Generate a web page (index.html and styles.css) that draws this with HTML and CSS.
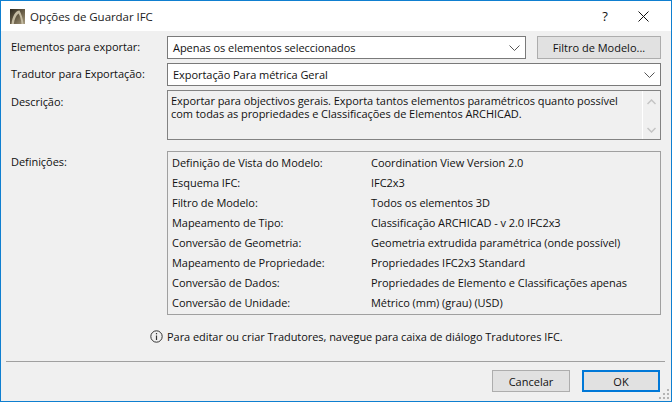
FILE: index.html
```html
<!DOCTYPE html>
<html lang="pt">
<head>
  <meta charset="UTF-8">
  <title>Opções de Guardar IFC</title>
  <link rel="stylesheet" href="styles.css">
</head>
<body>
  <div class="window">
    <div class="titlebar">
      <svg class="app-icon" width="15" height="15" viewBox="0 0 15 15">
        <defs>
          <linearGradient id="logo-bg" x1="0" y1="0" x2="1" y2="1">
            <stop offset="0" stop-color="#2e2a20"/>
            <stop offset="0.55" stop-color="#6a5f48"/>
            <stop offset="1" stop-color="#a89c80"/>
          </linearGradient>
        </defs>
        <rect width="15" height="15" fill="url(#logo-bg)"/>
        <path d="M1.500 15C2.500 7 5.500 1.500 9.500 1.500C11.500 5 13 10 13.500 15H11.500C11 10 10 6.500 8.500 4.500C6 6.500 4.500 10 3.800 15Z" fill="#c4bba2"/>
      </svg>
      <span class="title">Opções de Guardar IFC</span>
      <span class="help">?</span>
      <svg class="close" width="11" height="11" viewBox="0 0 11 11">
        <path d="M0.500 0.500L10.500 10.500M10.500 0.500L0.500 10.500" stroke="#111" stroke-width="1" fill="none"/>
      </svg>
    </div>

    <div class="content">
      <div class="form">
        <label class="label label-row1">Elementos para exportar:</label>
        <div class="row">
          <div class="select grow">
            <span>Apenas os elementos seleccionados</span>
            <svg class="chevron" width="11" height="6" viewBox="0 0 11 6"><path d="M0.500 0.500L5.500 5.500L10.500 0.500" stroke="#555" fill="none"/></svg>
          </div>
          <button class="btn filter-btn">Filtro de Modelo...</button>
        </div>

        <label class="label label-row2">Tradutor para Exportação:</label>
        <div class="select">
          <span>Exportação Para métrica Geral</span>
          <svg class="chevron" width="11" height="6" viewBox="0 0 11 6"><path d="M0.500 0.500L5.500 5.500L10.500 0.500" stroke="#555" fill="none"/></svg>
        </div>

        <label class="label label-desc">Descrição:</label>
        <div class="description">
          <p>Exportar para objectivos gerais. Exporta tantos elementos paramétricos quanto possível com todas as propriedades e Classificações de Elementos ARCHICAD.</p>
          <div class="scrollbar">
            <svg width="9" height="6" viewBox="0 0 9 6"><path d="M0.500 5L4.500 1L8.500 5" stroke="#c4c4c4" stroke-width="1.500" fill="none"/></svg>
            <svg width="9" height="6" viewBox="0 0 9 6"><path d="M0.500 1L4.500 5L8.500 1" stroke="#c4c4c4" stroke-width="1.500" fill="none"/></svg>
          </div>
        </div>

        <label class="label label-defs">Definições:</label>
        <div class="settings">
          <span>Definição de Vista do Modelo:</span><span>Coordination View Version 2.0</span>
          <span>Esquema IFC:</span><span>IFC2x3</span>
          <span>Filtro de Modelo:</span><span>Todos os elementos 3D</span>
          <span>Mapeamento de Tipo:</span><span>Classificação ARCHICAD - v 2.0 IFC2x3</span>
          <span>Conversão de Geometria:</span><span>Geometria extrudida paramétrica (onde possível)</span>
          <span>Mapeamento de Propriedade:</span><span>Propriedades IFC2x3 Standard</span>
          <span>Conversão de Dados:</span><span>Propriedades de Elemento e Classificações apenas</span>
          <span>Conversão de Unidade:</span><span>Métrico (mm) (grau) (USD)</span>
        </div>
      </div>

      <div class="info">
        <svg width="13" height="13" viewBox="0 0 13 13">
          <circle cx="6.500" cy="6.500" r="5.700" stroke="#333" fill="none"/>
          <path d="M6.500 5.500V10" stroke="#333" stroke-width="1.200"/>
          <rect x="5.900" y="3" width="1.200" height="1.300" fill="#333"/>
        </svg>
        <span>Para editar ou criar Tradutores, navegue para caixa de diálogo Tradutores IFC.</span>
      </div>

      <div class="divider"></div>

      <div class="footer">
        <button class="btn footer-btn">Cancelar</button>
        <button class="btn footer-btn primary">OK</button>
      </div>
    </div>
    <svg class="grip" width="11" height="11" viewBox="0 0 11 11">
      <path d="M8 0h2v2H8zM4 4h2v2H4zM8 4h2v2H8zM0 8h2v2H0zM4 8h2v2H4zM8 8h2v2H8z" fill="#b4b4b4"/>
    </svg>
  </div>
</body>
</html>
```

FILE: styles.css
```css
* {
  margin: 0;
  padding: 0;
  box-sizing: border-box;
  font-family: "Open Sans", "Noto Sans", sans-serif;
}

html,
body {
  width: 672px;
  height: 402px;
  overflow: hidden;
}

body {
  font-size: 11px;
  letter-spacing: -0.050px;
  color: #111;
}

.window {
  position: relative;
  width: 672px;
  height: 402px;
  display: flex;
  flex-direction: column;
  background: #f0f0f0;
  border: 1px solid #0f7fd0;
}

.titlebar {
  height: 30px;
  flex: none;
  display: flex;
  align-items: center;
  background: #fff;
  padding-left: 9px;
}

.app-icon {
  margin-right: 5px;
}

.title {
  font-size: 11.500px;
  flex: 1;
  color: #222;
}

.help {
  font-size: 13px;
  width: 46px;
  margin-right: 3px;
  text-align: center;
}

.close {
  margin: 0 22px 0 7px;
}

.content {
  flex: 1;
  display: flex;
  flex-direction: column;
  padding: 5px 5px 0 10px;
}

.form {
  display: grid;
  grid-template-columns: 156px 494px;
  row-gap: 4px;
}

.label {
  line-height: 16px;
}

.label-row1 {
  padding-top: 3px;
}

.label-row2 {
  padding-top: 3px;
}

.label-desc {
  padding-top: 4px;
}

.label-defs {
  padding-top: 10px;
}

.row {
  display: flex;
  gap: 11px;
}

.grow {
  flex: 1;
}

.select {
  height: 23px;
  display: flex;
  align-items: center;
  justify-content: space-between;
  background: #fff;
  border: 1px solid #7a7a7a;
  padding: 0 5px 0 5px;
}

.btn {
  font-size: 11px;
  color: #111;
  background: #e1e1e1;
  border: 1px solid #adadad;
}

.filter-btn {
  width: 124px;
  height: 23px;
}

.description {
  height: 50px;
  display: flex;
  justify-content: space-between;
  border: 1px solid #828282;
  background: #f0f0f0;
  padding-left: 3px;
  line-height: 13px;
}

.description p {
  width: 468px;
  padding-top: 3px;
}

.scrollbar {
  width: 18px;
  display: flex;
  flex-direction: column;
  justify-content: space-between;
  align-items: center;
  padding: 8px 0 6px;
  border-left: 1px solid #fff;
}

.settings {
  margin-top: 7px;
  height: 164px;
  display: grid;
  grid-template-columns: 199px 1fr;
  grid-auto-rows: 20.100px;
  align-items: center;
  border: 1px solid #a0a0a0;
  padding: 0 0 0 4px;
}

.info {
  margin-top: 13px;
  height: 16px;
  display: flex;
  align-items: center;
  gap: 4px;
  padding-left: 139px;
}

.divider {
  height: 1px;
  margin: 17px 0 0 -5px;
  width: 659px;
  background: #a0a0a0;
}

.footer {
  margin-top: 8px;
  display: flex;
  justify-content: flex-end;
  gap: 12px;
  padding-right: 6px;
}

.footer-btn {
  width: 78px;
  height: 22px;
}

.primary {
  border: 2px solid #0078d7;
}

.grip {
  position: absolute;
  right: 1px;
  bottom: 1px;
}
```
